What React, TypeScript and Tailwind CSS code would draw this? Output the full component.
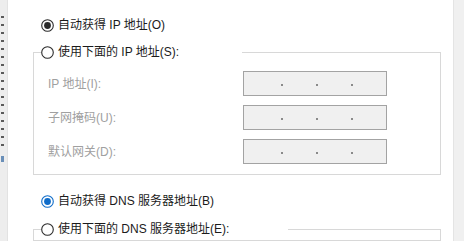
import React from 'react';

type RadioKind = 'off' | 'on' | 'blue';

function Radio({ kind }: { kind: RadioKind }) {
  const stroke = kind === 'blue' ? '#0f6cc9' : '#2b2b2b';
  return (
    <svg width="13" height="13" viewBox="0 0 13 13" className="shrink-0">
      <circle cx="6.5" cy="6.5" r="5.8" fill="#fff" stroke={stroke} strokeWidth="1.1" />
      {kind !== 'off' && <circle cx="6.5" cy="6.5" r="3.4" fill={stroke} />}
    </svg>
  );
}

function Option({ kind, label }: { kind: RadioKind; label: string }) {
  return (
    <div className="flex items-center gap-[4px] h-[16px]">
      <Radio kind={kind} />
      <span className="text-[12px] leading-[16px] text-[#1b1b1b]">{label}</span>
    </div>
  );
}

function IpBox() {
  return (
    <div className="w-[144px] h-[25px] border border-[#a3a3a3] bg-[#f0f0f0] flex items-center pl-[37px] pt-[3px] gap-[33px]">
      <span className="w-[2px] h-[2px] bg-[#8a8a8a]" />
      <span className="w-[2px] h-[2px] bg-[#8a8a8a]" />
      <span className="w-[2px] h-[2px] bg-[#8a8a8a]" />
    </div>
  );
}

const fields = ['IP 地址(I):', '子网掩码(U):', '默认网关(D):'];

const specks = [11, 17, 30, 36, 48, 55, 66, 80, 91, 101, 109, 128, 141, 156, 162, 176, 190];

export default function App() {
  return (
    <div
      className="w-[464px] h-[241px] bg-white flex overflow-hidden"
      style={{ fontFamily: '"Segoe UI", "Liberation Sans", "Noto Sans CJK SC", sans-serif' }}
    >
      {/* cut-off neighbouring pane */}
      <div className="w-[8px] shrink-0 bg-[#ededed] border-r border-[#e2e2e2] flex flex-col pt-[10px]">
        {specks.map((y, i) => (
          <span
            key={i}
            className="w-[3px] h-[2px] bg-[#5a5a5a] ml-[1px] mt-[6px]"
          />
        ))}
        <span className="w-[3px] h-[6px] bg-[#6a8fb8] ml-[1px] mt-[10px]" />
      </div>

      <div className="flex-1 flex flex-col pl-[25px] pr-[12px] pt-[17px]">
        <div className="pl-[8px]">
          <Option kind="on" label="自动获得 IP 地址(O)" />
        </div>

        <fieldset className="mt-[11px] border border-[#d8d8d8] pb-[10px]">
          <legend className="ml-[7px] w-[201px]">
            <Option kind="off" label="使用下面的 IP 地址(S):" />
          </legend>
          <div className="flex flex-col gap-[9px] pt-[11px] pl-[14px]">
            {fields.map((f) => (
              <div key={f} className="flex items-center justify-between pr-[53px]">
                <span className="text-[12px] text-[#a0a0a0]">{f}</span>
                <IpBox />
              </div>
            ))}
          </div>
        </fieldset>

        <div className="pl-[8px] mt-[18px]">
          <Option kind="blue" label="自动获得 DNS 服务器地址(B)" />
        </div>

        <fieldset className="mt-[12px] border border-[#d8d8d8] h-[60px]">
          <legend className="ml-[7px] w-[247px]">
            <Option kind="off" label="使用下面的 DNS 服务器地址(E):" />
          </legend>
        </fieldset>
      </div>

      <div className="w-[11px] shrink-0 bg-[#f0f0f0] border-l border-[#e4e4e4]" />
    </div>
  );
}
